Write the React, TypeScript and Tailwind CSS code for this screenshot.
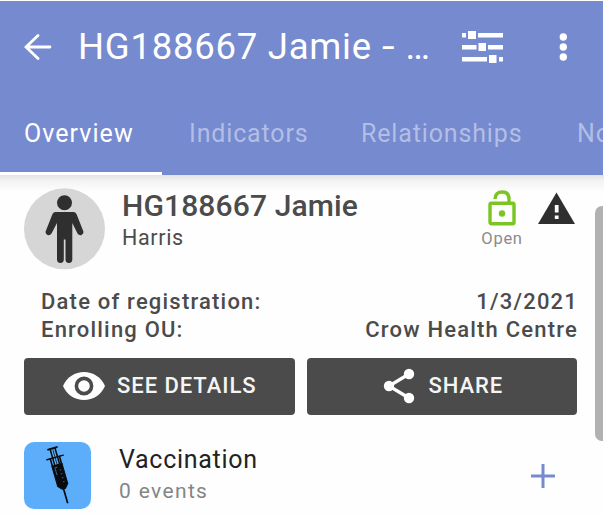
import React from "react";

const tabs = [
  { label: "Overview", cls: "w-[165px] text-white tracking-[1.05px]" },
  { label: "Indicators", cls: "w-[172px] text-[#b3bee5]" },
  { label: "Relationships", cls: "w-[216px] text-[#b3bee5]" },
  { label: "Notes", cls: "text-[#b3bee5]" },
];

function Toolbar() {
  return (
    <div className="flex h-[92px] shrink-0 items-center">
      <svg className="ml-[24px] w-[28px] shrink-0" height="28" viewBox="0 0 28 28" fill="none" stroke="#fff" strokeWidth="2.8" strokeLinecap="round">
        <path d="M26 14H2.5M14 2.5L2 14L14 25.5" />
      </svg>
      <h1 className="ml-[26px] w-[353px] shrink-0 overflow-hidden text-[36.5px] leading-[48px] font-normal tracking-[0.75px] whitespace-nowrap text-white">
        HG188667 Jamie <span className="inline-block origin-left scale-x-125">-</span><span className="ml-[4px] tracking-normal"> …</span>
      </h1>
      <svg className="ml-[31px] shrink-0" width="42" height="34" viewBox="0 0 42 34" fill="#fff">
        <path d="M0 3h4v4.5H0zM6 1h8v8H6zM16 3H41v4.5H16zM0 15h14.5v4.5H0zM16.500 13h7.500v8h-7.500zM26 15H41v4.5H26zM0 27h25v4.500H0zM27 25h7.500v8h-7.500zM37 27h4v4.500h-4z" />
      </svg>
      <svg className="ml-[55px] shrink-0" width="10" height="30" viewBox="0 0 10 30" fill="#fff">
        <circle cx="4.300" cy="5" r="3.700" />
        <circle cx="4.300" cy="15" r="3.700" />
        <circle cx="4.300" cy="25" r="3.700" />
      </svg>
    </div>
  );
}

function Person() {
  return (
    <svg width="81" height="82" viewBox="0 0 81 82" className="shrink-0">
      <circle cx="40.500" cy="40.800" r="40.500" fill="#d6d6d6" />
      <g fill="#2f2f2f">
        <circle cx="40.500" cy="14.700" r="7.500" />
        <path d="M31.500 24H49.500Q51.500 24 52.500 26L59.300 43.200Q60 46 57.500 47Q55 47.700 53.500 45.500L48.300 35V71.500A3.400 3.400 0 0 1 41.500 71.500V51.500H39.800V71.500A3.400 3.400 0 0 1 33 71.500V35L27.500 45.500Q26 47.700 23.500 47Q21 46 21.700 43.200L28.500 26Q29.500 24 31.500 24Z" />
      </g>
    </svg>
  );
}

function Syringe() {
  return (
    <svg width="67" height="67" viewBox="0 0 67 67" fill="none" stroke="#080c10">
      <g transform="translate(28 6.500) rotate(-16)">
        <path d="M-4 0H5" strokeWidth="2" strokeLinecap="round" />
        <path d="M-2 0V17M3 0V17" strokeWidth="1.500" />
        <path d="M0.500 1V17" strokeWidth="0.700" />
        <path d="M-8 9.500H9" strokeWidth="1.500" strokeLinecap="round" />
        <path d="M-4.500 9V18M5 9V18" strokeWidth="1.600" />
        <path d="M-5 17H5.500V38L2 42H-1.500L-5 38Z" fill="#080c10" strokeWidth="1" />
        <path d="M-3 19.500H0M-2.500 20V27M1.500 23H3M1.500 27H3M1.500 31H3M1.500 35H3" stroke="#507da7" strokeWidth="0.700" />
        <path d="M0 41V57" strokeWidth="1.700" />
      </g>
    </svg>
  );
}

function Field({ label, value }: { label: string; value: string }) {
  return (
    <div className="flex justify-between">
      <dt>{label}</dt>
      <dd className="-mr-[1px]">{value}</dd>
    </div>
  );
}

export default function App() {
  return (
    <div className="relative h-[514px] w-[604px] overflow-hidden bg-[#fefefe] pt-px font-['Roboto',sans-serif] text-[#4b4b4b]">
      <header className="flex h-[174px] w-[603px] flex-col overflow-hidden bg-[#768ad0]">
        <Toolbar />
        <nav className="flex h-[79px] shrink-0 pl-[24px] text-[25px] leading-[82px] tracking-[0.85px] whitespace-nowrap">
          {tabs.map((t) => (
            <span key={t.label} className={`shrink-0 ${t.cls}`}>{t.label}</span>
          ))}
        </nav>
        <div className="h-[3px] w-[162px] shrink-0 bg-white" />
      </header>

      <main className="h-[339px] bg-[linear-gradient(#e3e3e2_0px,#f3f3f3_6px,#fefefe_17px)] pt-[13px]">
        <section className="flex h-[100px] pl-[24px]">
          <Person />
          <div className="ml-[17px] w-[357px] whitespace-nowrap">
            <div className="h-[35px] text-[30px] leading-[35px] font-medium tracking-[0.13px]">HG188667 Jamie</div>
            <div className="mt-[1px] h-[28px] text-[21.500px] leading-[28px] tracking-[0.65px]">Harris</div>
          </div>
          <div className="flex w-[46px] flex-col items-center">
            <svg className="mt-[2px] shrink-0" width="28" height="36" viewBox="0 0 28 36" fill="none" stroke="#7bc522" strokeWidth="3.400">
              <rect x="2" y="13.200" width="24" height="20.500" rx="1.500" />
              <path d="M7 9Q7.500 2 14 2Q21 2 21 9V13" />
              <circle cx="14" cy="23.500" r="3.200" fill="#7bc522" stroke="none" />
            </svg>
            <div className="mt-[1px] h-[24px] text-[16.500px] leading-[24px] tracking-[0.7px] text-[#8b8b8b]">Open</div>
          </div>
          <svg className="mt-[4px] ml-[13px] shrink-0" width="38" height="33" viewBox="0 0 38 33">
            <path d="M18.500 0.500L37 32H0Z" fill="#2f2f2f" />
            <path d="M16.800 13h3.800v7.500h-3.800zM16.800 23.500h3.800v3.500h-3.800z" fill="#fff" />
          </svg>
        </section>

        <dl className="w-[577px] pl-[41px] text-[22px] leading-[27.500px] font-medium tracking-[1.2px] whitespace-nowrap">
          <Field label="Date of registration:" value="1/3/2021" />
          <Field label="Enrolling OU:" value="Crow Health Centre" />
        </dl>

        <div className="mt-[14.500px] flex gap-[12px] pl-[24px] text-[22px] font-medium tracking-[0.95px] text-[#f5f5f5]">
          <button className="flex h-[57px] w-[270.500px] items-center rounded-[4px] bg-[#4b4b4b] pl-[39px] whitespace-nowrap">
            <svg width="42" height="30" viewBox="0 0 42 30">
              <path d="M0 15C4 6 12 1 21 1S38 6 42 15C38 24 30 29 21 29S4 24 0 15Z" fill="#fff" />
              <circle cx="21" cy="15" r="7.600" fill="#fff" stroke="#4b4b4b" strokeWidth="3.600" />
            </svg>
            <span className="ml-[12px] leading-[28px]">SEE DETAILS</span>
          </button>
          <button className="flex h-[57px] w-[270.500px] items-center rounded-[4px] bg-[#4b4b4b] pl-[76px] whitespace-nowrap">
            <svg width="32" height="36" viewBox="0 0 32 36" fill="#fff">
              <path d="M26 6L6 18L26 30" fill="none" stroke="#fff" strokeWidth="3.300" />
              <circle cx="26" cy="6" r="5.200" />
              <circle cx="6" cy="18" r="5.200" />
              <circle cx="26" cy="30" r="5.200" />
            </svg>
            <span className="ml-[14px] leading-[28px]">SHARE</span>
          </button>
        </div>

        <section className="mt-[27.500px] flex pl-[24px]">
          <div className="h-[67px] w-[67px] rounded-[10px] bg-[#5caefb]"><Syringe /></div>
          <div className="ml-[28px] w-[411px] whitespace-nowrap">
            <div className="h-[35px] text-[25px] leading-[35px] tracking-[0.7px] text-[#222]">Vaccination</div>
            <div className="h-[28px] text-[21px] leading-[28px] tracking-[1.35px] text-[#858585]">0 events</div>
          </div>
          <svg className="mt-[21px]" width="26" height="26" viewBox="0 0 26 26" stroke="#768ad0" strokeWidth="3">
            <path d="M1 13H25M13 1V25" />
          </svg>
        </section>
      </main>
      <div className="absolute top-[206px] left-[595px] h-[235px] w-[8px] rounded-l-[7px] bg-[#b1b1b1]" />
    </div>
  );
}
